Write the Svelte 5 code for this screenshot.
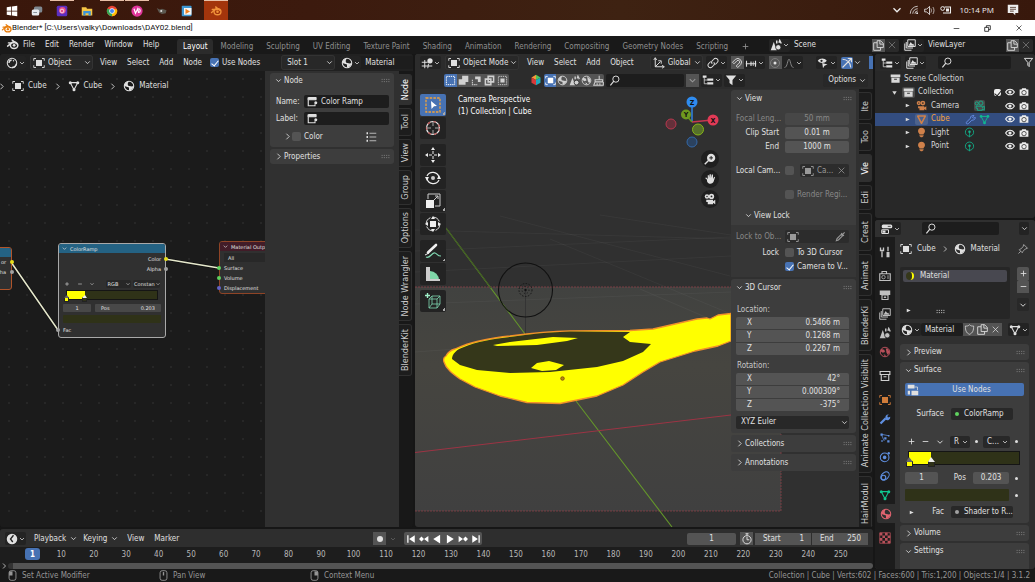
<script>
  const icons = {
    chev: '<path d="M4 6l4 4 4-4" fill="none" stroke="currentColor" stroke-width="1.500"/>',
    right: '<path d="M6 3l5 5-5 5" fill="none" stroke="currentColor" stroke-width="1.500"/>',
    tri: '<path d="M4 4l9 4-9 4z" fill="currentColor"/>',
    tridown: '<path d="M3 5h10l-5 8z" fill="currentColor"/>',
    grip: '<path d="M1 6h2M5 6h2M9 6h2M13 6h2M1 10h2M5 10h2M9 10h2M13 10h2" stroke="currentColor" stroke-width="1.400"/>',
    blender: '<path d="M2 10L9 4.500M3 6h7M7.500 2.500L13 7" fill="none" stroke="currentColor" stroke-width="1.800" stroke-linecap="round"/><ellipse cx="10" cy="9" rx="4.600" ry="4" fill="none" stroke="currentColor" stroke-width="1.800"/><circle cx="10" cy="9" r="1.700" fill="currentColor"/>',
    object: '<path d="M1 5V2h3M12 2h3v3M15 11v3h-3M4 14H1v-3" fill="none" stroke="currentColor" stroke-width="1.200"/><rect x="4" y="4" width="8" height="8" fill="currentColor"/>',
    sphere: '<circle cx="8" cy="8" r="6.300" fill="none" stroke="currentColor" stroke-width="1.400"/><path d="M1.700 8A6.300 6.300 0 0 1 8 1.700c-2 2-2 4-1 6l5 1 2-1a6.300 6.300 0 0 1-2 4.500L8 14.300V10z" fill="currentColor"/>',
    shader: '<circle cx="8" cy="8" r="6.300" fill="none" stroke="currentColor" stroke-width="1.400"/><path d="M7.500 4A4 4 0 0 0 4 8M8 14c3 0 5-2 6-5" fill="none" stroke="currentColor" stroke-width="1.800"/><circle cx="10" cy="5" r="1" fill="currentColor"/>',
    mesh: '<path d="M3 3.500h10L8 13z" fill="none" stroke="currentColor" stroke-width="1.400"/><circle cx="3" cy="3.500" r="2" fill="currentColor"/><circle cx="13" cy="3.500" r="2" fill="currentColor"/><circle cx="8" cy="13" r="2" fill="currentColor"/>',
    view3d: '<path d="M5 4v11M1 7h8M1 12h14M10 9l-1 6" stroke="currentColor" stroke-width="1.300"/><circle cx="12" cy="5" r="3.500" fill="currentColor"/>',
    node: '<path d="M3 2h10v3H3v8h9v-2" fill="none" stroke="currentColor" stroke-width="1.500"/><path d="M2 2h12v3H2z" fill="currentColor"/><circle cx="13" cy="9" r="2" fill="currentColor"/>',
    list: '<path d="M2 3h2M2 8h2M2 13h2" stroke="currentColor" stroke-width="2.500"/><path d="M6 3h9M6 8h9M6 13h9" stroke="currentColor"/>',
    axes: '<path d="M3 1v12h12M3 13l7-7" fill="none" stroke="currentColor" stroke-width="1.300"/><path d="M1 4l2-3 2 3M12 11l3 2-3 2M7 5h4v4" fill="none" stroke="currentColor" stroke-width="1.200"/>',
    link: '<path d="M7 9a3 3 0 0 1 0-4l2-2a3 3 0 0 1 5 4l-3 3M9 7a3 3 0 0 1 0 4l-2 2a3 3 0 0 1-5-4l3-3" fill="none" stroke="currentColor" stroke-width="1.400"/>',
    magnet: '<path d="M2 7l4-4a5 5 0 0 1 7 7l-4 4-2-2 4-4a2 2 0 0 0-3-3L4 9z" fill="none" stroke="currentColor" stroke-width="1.200"/>',
    snap: '<path d="M1 9h14M2 5v8M8 6v6M14 5v8" stroke="currentColor" stroke-width="1.500"/><path d="M11 6v6" stroke="currentColor"/>',
    prop: '<circle cx="8" cy="8" r="6" fill="none" stroke="#888"/><circle cx="8" cy="8" r="2" fill="currentColor"/>',
    curve: '<path d="M2 14C6 14 6 3 8 3s2 11 6 11" fill="none" stroke="#888" stroke-width="1.300"/>',
    eyeobj: '<path d="M1 5c3-4 9-4 12 0-3 4-9 4-12 0z" fill="currentColor"/><circle cx="6" cy="5" r="1.500" fill="#222"/><path d="M7 8l7 2-4 1.500L8 15z" fill="currentColor"/>',
    gizmo: '<path d="M2 14L14 2M9 2h5v5M2 3c6 0 11 5 11 11" fill="none" stroke="currentColor" stroke-width="1.500"/>',
    scene: '<path d="M1 15l4-11 4 11z" fill="currentColor"/><circle cx="11" cy="11" r="3.500" fill="currentColor" stroke="#222"/><path d="M12 5l1-3 2 4M9 2v4" stroke="currentColor" stroke-width="2"/>',
    layers: '<path d="M5 1h10v9H5zM3 4v8h9M1 6v9h9" fill="none" stroke="currentColor" stroke-width="1.300"/><path d="M6 9l3-5 2 3 1-1 2 3z" fill="currentColor"/>',
    copy: '<path d="M6 1h5l4 4v6H6zM10 1v5h5M6 4H1v11h10v-4" fill="none" stroke="currentColor" stroke-width="1.300"/>',
    x: '<path d="M3 3l10 10M13 3L3 13" stroke="currentColor" stroke-width="1.300"/>',
    plus: '<path d="M8 3v10M3 8h10" stroke="currentColor" stroke-width="1.500"/>',
    minus: '<path d="M3 8h10" stroke="currentColor" stroke-width="1.500"/>',
    search: '<circle cx="10" cy="6" r="4.500" fill="none" stroke="currentColor" stroke-width="1.400"/><path d="M7 9l-5 6" stroke="currentColor" stroke-width="1.700"/>',
    tree: '<path d="M1 2h5v3H1zM7 6h8v3H7zM7 11h8v3H7z" fill="currentColor"/><path d="M3 4v9h4M3 8h4" fill="none" stroke="currentColor"/>',
    filter: '<path d="M1 2h14l-5 6v7l-4-3V8z" fill="currentColor"/>',
    filterline: '<path d="M2 2h12L9 8v6l-2-2V8z" fill="none" stroke="currentColor" stroke-width="1.400"/>',
    box: '<path d="M1 2h14v4H1zM2 7h12v7H2z" fill="currentColor"/><path d="M6 9h4" stroke="#333" stroke-width="1.500"/>',
    boxline: '<path d="M1.500 2h13v4h-13zM3 6h10v8H3zM6 9h4" fill="none" stroke="currentColor" stroke-width="1.500"/>',
    eye: '<path d="M1 8c3-6 11-6 14 0-3 6-11 6-14 0z" fill="none" stroke="currentColor" stroke-width="1.700"/><circle cx="8" cy="8" r="2.600" fill="currentColor"/>',
    camera: '<path d="M1 4h3l1-2h6l1 2h3v10H1z" fill="currentColor"/><circle cx="8" cy="9" r="3.500" fill="none" stroke="#333" stroke-width="1.300"/>',
    movie: '<circle cx="4" cy="4.500" r="3" fill="currentColor"/><circle cx="10" cy="4.500" r="3.500" fill="currentColor"/><circle cx="4" cy="4.500" r="1" fill="#222"/><circle cx="10" cy="4.500" r="1.200" fill="#222"/><path d="M3 9h9v2l3-2v6l-3-2v2H5v-3H3z" fill="currentColor"/>',
    movieline: '<circle cx="4" cy="5" r="2.300" fill="none" stroke="currentColor" stroke-width="1.200"/><circle cx="10" cy="4.500" r="3" fill="none" stroke="currentColor" stroke-width="1.200"/><path d="M3 9h9v2l3-2v6l-3-2v2H5v-3H3z" fill="none" stroke="currentColor" stroke-width="1.200"/>',
    bulb: '<path d="M5 10a5 5 0 1 1 6 0v1H5zM5 12h6v1l-2 2H7l-2-2z" fill="currentColor"/>',
    lamp: '<circle cx="8" cy="7.500" r="6" fill="none" stroke="currentColor" stroke-width="1.200"/><circle cx="8" cy="7" r="1.800" fill="currentColor"/><path d="M8 8v7" stroke="currentColor"/>',
    triobj: '<path d="M2.500 3h11L8 13.500z" fill="none" stroke="currentColor" stroke-width="2.200" stroke-linejoin="round"/>',
    wrench: '<path d="M2 14L9 7" stroke="currentColor" stroke-width="3"/><path d="M9 8a4 4 0 0 1 4-6l-2 2 1 2 3-1a4 4 0 0 1-6 4z" fill="currentColor"/>',
    wrenchline: '<path d="M2 12l6-6c0-3 2-4 5-4l-2 3 1 1 3-1c0 3-2 4-5 4l-5 5c-2 1-4 0-3-2z" fill="none" stroke="currentColor" stroke-width="1.300"/>',
    props: '<rect x="1" y="2" width="14" height="5" rx="2" fill="currentColor"/><path d="M9 4.500h4" stroke="#222"/><rect x="1" y="9" width="9" height="5" rx="1" fill="none" stroke="currentColor" stroke-width="1.400"/><path d="M2 10h4v3H2z" fill="currentColor"/>',
    tools: '<path d="M4 7v8M12 1v6" stroke="currentColor" stroke-width="1.800"/><path d="M2 2v4h4V2" fill="none" stroke="currentColor" stroke-width="1.800"/><path d="M10 8h4v7h-4z" fill="currentColor"/>',
    render: '<path d="M1 5h14v9H1zM4 5V2h6v3" fill="none" stroke="currentColor" stroke-width="1.500"/><circle cx="6" cy="9.500" r="2.300" fill="none" stroke="currentColor"/><path d="M12 7v5" stroke="currentColor"/>',
    output: '<path d="M1 2h14v6H1z" fill="currentColor"/><path d="M4 8h8v6H4z" fill="none" stroke="currentColor" stroke-width="1.500"/><path d="M6 12l2-3 2 3z" fill="currentColor"/>',
    world: '<circle cx="8" cy="8" r="6.300" fill="none" stroke="currentColor" stroke-width="1.300"/><path d="M3 4l4 1 1 3-3 1-3-2zM9 3l3 1 2 4-2 4-2-3zM6 11l3 1-1 2z" fill="currentColor"/>',
    particles: '<path d="M3 3l10 2M3 3l4 9" stroke="currentColor"/><path d="M2 2h3v3H2zM12 4h2v2h-2zM7 7h3v3H7zM11 11h3v3h-3zM3 11h2v2H3z" fill="currentColor"/>',
    physics: '<circle cx="7.500" cy="8.500" r="5.800" fill="none" stroke="currentColor" stroke-width="1.400"/><circle cx="7.500" cy="8.500" r="2.400" fill="currentColor"/><circle cx="13" cy="3" r="1.600" fill="currentColor"/>',
    constraint: '<ellipse cx="8" cy="8" rx="6.500" ry="4.500" transform="rotate(-45 8 8)" fill="none" stroke="currentColor" stroke-width="1.400"/><circle cx="6" cy="10" r="3" fill="none" stroke="currentColor" stroke-width="1.500"/>',
    texture: '<path d="M1 1h14v14H1z" fill="none" stroke="currentColor"/><path d="M1 1h3.500v3.500H1zM8 1h3.500v3.500H8zM4.500 4.500H8V8H4.500zM11.500 4.500H15V8h-3.500zM1 8h3.500v3.500H1zM8 8h3.500v3.500H8zM4.500 11.500H8V15H4.500zM11.500 11.500H15V15h-3.500z" fill="currentColor"/>',
    pin: '<path d="M9 2l5 5-3 1-3 3-1 2-4-4 2-1 3-3zM5 11l-3 3" fill="none" stroke="currentColor" stroke-width="1.200"/>',
    shield: '<path d="M2 3c3 0 4 0 6-2 2 2 3 2 6 2 0 6-1 10-6 12C3 13 2 9 2 3z" fill="none" stroke="currentColor" stroke-width="1.100"/>',
    usenodes: '<path d="M1 1h9v5H1zM6 9h9v6H6zM1 9h3v5H1z" fill="currentColor"/><path d="M10 4h4v4" fill="none" stroke="currentColor"/>',
    dropper: '<path d="M2 14l1-3 6-6 2 2-6 6zM9 3l4 4M11 5l3-3" fill="none" stroke="currentColor" stroke-width="1.600"/>',
    clock: '<circle cx="8" cy="8" r="7" fill="currentColor"/><path d="M10 3L6 8l3 4" stroke="#222" fill="none" stroke-width="1.800"/>',
    watch: '<circle cx="8" cy="9" r="5.500" fill="none" stroke="currentColor" stroke-width="1.300"/><path d="M8 9V5M6 1h4M8 1v2M8 9h3" stroke="currentColor" stroke-width="1.300"/>',
    rec: '<circle cx="8" cy="8" r="4" fill="currentColor"/>',
    first: '<path d="M2 2h2v12H2zM14 2v12L5 8z" fill="currentColor"/>',
    prevkey: '<path d="M0 8l4-4 4 4-4 4zM15 3v10L8 8z" fill="currentColor"/>',
    play: '<path d="M3 1l11 7-11 7z" fill="currentColor"/>',
    back: '<path d="M13 1L2 8l11 7z" fill="currentColor"/>',
    nextkey: '<path d="M16 8l-4-4-4 4 4 4zM1 3v10l7-5z" fill="currentColor"/>',
    last: '<path d="M14 2h-2v12h2zM2 2v12l9-6z" fill="currentColor"/>',
    mouseL: '<rect x="3" y="1" width="10" height="14" rx="3" fill="none" stroke="currentColor" stroke-width="1.300"/><path d="M3 2h5v6H3z" fill="currentColor"/>',
    mouseM: '<rect x="3" y="1" width="10" height="14" rx="3" fill="none" stroke="currentColor" stroke-width="1.300"/><path d="M7 3h2v5H7z" fill="currentColor"/>',
    mouseR: '<rect x="3" y="1" width="10" height="14" rx="3" fill="none" stroke="currentColor" stroke-width="1.300"/><path d="M8 2h5v6H8z" fill="currentColor"/>',
    sel: '<rect x="2" y="2" width="12" height="12" fill="none" stroke="currentColor" stroke-width="1.400" stroke-dasharray="2 1.200"/>',
    sel2: '<path d="M6 1h9v9h-4v4H1V6h5z" fill="currentColor"/>',
    sel3: '<path d="M6 2h8v8h-4V6H6z" fill="currentColor"/><path d="M2 7v7h7" fill="none" stroke="currentColor" stroke-width="1.500" stroke-dasharray="2 1.200"/>',
    sel4: '<path d="M6 2h8v8H6zM2 6h8v8H2z" fill="none" stroke="currentColor" stroke-width="2.200"/>',
    sel5: '<rect x="2" y="2" width="12" height="12" fill="none" stroke="currentColor" stroke-width="1.300" stroke-dasharray="2 1.200"/><path d="M5 5h6v6H5z" fill="currentColor"/>',
    hex: '<path d="M8 1v7L2 4.500z" fill="#f39a3b"/><path d="M2 4.500L8 8v7l-6-3.500z" fill="#d83a3a"/><path d="M8 1l6 3.500L8 8z" fill="#52c55a"/><path d="M14 4.500v7L8 15V8z" fill="#20a9bd"/>',
    brush: '<path d="M9 1v6M3 7h11v3H3zM3 10l-2 5h14v-5M6 12v3M10 12v3" fill="none" stroke="currentColor" stroke-width="1.500"/>',
    tselect: '<rect x="1" y="1" width="14" height="14" fill="none" stroke="#f2a33a" stroke-width="1.300" stroke-dasharray="2.500 1.200"/><path d="M6 4l6 5-3 .3L6.500 12z" fill="#fff"/>',
    tcursor: '<circle cx="8" cy="8" r="6.500" fill="none" stroke="#eee" stroke-width="1.200"/><circle cx="8" cy="8" r="6.500" fill="none" stroke="#c05555" stroke-width="1.200" stroke-dasharray="3 3"/><path d="M8 1v5M8 10v5M1 8h5M10 8h5" stroke="#ccc" stroke-width=".8"/>',
    tmove: '<path d="M8 0l2 3H6zM8 16l2-3H6zM0 8l3 2V6zM16 8l-3 2V6z" fill="#eee"/><path d="M8 4v3M8 9v3M4 8h3M9 8h3" stroke="#eee"/>',
    trotate: '<path d="M2 6a6.500 6.500 0 0 1 12 1M14 10a6.500 6.500 0 0 1-12-1" fill="none" stroke="#eee" stroke-width="1.200"/><circle cx="8" cy="8" r="2" fill="#ccc"/><path d="M0 7h4l-2 4zM12 9h4l-2-4z" fill="#eee"/>',
    tscale: '<path d="M3 6V1h12v12h-5M9 7l4-4M10 3h3v3" fill="none" stroke="#ccc" stroke-width="1"/><path d="M1 7h8v8H1z" fill="#eee"/>',
    ttrans: '<circle cx="8" cy="8" r="6.800" fill="none" stroke="#ddd" stroke-dasharray="8 2.600"/><path d="M5 5h6v6H5zM8 0l2 3H6zM8 16l2-3H6zM0 8l3 2V6zM16 8l-3 2V6z" fill="#eee"/>',
    tannot: '<path d="M3 9.500L11 2" stroke="#eee" stroke-width="2.600" stroke-linecap="round"/><path d="M0 12l4-2" stroke="#eee"/><path d="M1 14c4 2 6-5 9-4s2 3 6 3" fill="none" stroke="#7fd6b0" stroke-width="1.200"/>',
    tmeasure: '<path d="M5 5a9 9 0 0 1 9 9H5z" fill="#7fd6a8"/><path d="M1 1h4v14H1z" fill="#ccc"/><path d="M1 13h14v2H1z" fill="#ccc"/>',
    tcube: '<path d="M4 6h8v9H4zM4 6l3-3h8v8l-3 4M12 6l3-3M7 3v8l-3 4M7 11h8" fill="none" stroke="#7fd6b0" stroke-width=".8"/><path d="M2.500 0v5M0 2.500h5" stroke="#9ff0c8" stroke-width="1.400"/>',
    hand: '<path d="M4 9L1.500 6.500 3 6l2 2V3h1.600v4L7.500 1.500h1.700V7l1.200-5H12v6l1.500-3 1.200.5L13 11c-1 4-7 5-9 0z" fill="currentColor"/>',
    zoom: '<circle cx="9.500" cy="6.500" r="5.500" fill="currentColor"/><path d="M6 10l-5 5" stroke="currentColor" stroke-width="2"/><path d="M9.500 4v5M7 6.500h5" stroke="#222" stroke-width="1.300"/>',
    wifi: '<path d="M2 14A12 12 0 0 1 14 2M6 14a8 8 0 0 1 8-8M9.500 14a4.500 4.500 0 0 1 4.500-4.500" fill="none" stroke="currentColor" stroke-width="1.200"/><circle cx="13" cy="13" r="1.500" fill="currentColor"/>',
    sound: '<path d="M1 6h3l4-4v12l-4-4H1z" fill="none" stroke="currentColor" stroke-width="1.200"/><path d="M10 5c1 2 1 4 0 6M13 3c2 3 2 7 0 10" stroke="currentColor" fill="none"/>',
    battery: '<path d="M6 4h8v8H4" fill="none" stroke="currentColor" stroke-width="1.400"/><path d="M8 6h4v4H8z" fill="currentColor"/><circle cx="3.500" cy="6" r="2.500" fill="none" stroke="currentColor" stroke-width="1.300"/>',
    note: '<path d="M1 1h14v11h-4v3l-3-3H1z" fill="currentColor"/><path d="M4 4.500h8M4 7h8M4 9.500h5" stroke="#3b1d10"/>',
    windows: '<path d="M1 3l6-1v5.500H1zM8 2l7-1v6.500H8zM1 8.500h6V14l-6-1zM8 8.500h7V15l-7-1z" fill="#fff"/>',
    chat: '<rect x="4" y="2" width="11" height="8" rx="2" fill="#7f8890"/><rect x="1" y="6" width="10" height="8" rx="2" fill="#e8edf0"/><path d="M3 10h5" stroke="#6a7480"/>',
    purple: '<rect x="1" y="1" width="14" height="14" rx="2" fill="#5b2fc0"/><circle cx="8.500" cy="7" r="4.500" fill="#e74d8b"/><circle cx="8" cy="8" r="2.500" fill="none" stroke="#fff"/>',
    folder: '<path d="M1 3h6l1 2h7v9H1z" fill="#f5c546"/><path d="M3 8h10v6h-3v-3H6v3H3z" fill="#3b93d8"/>',
    chrome: '<circle cx="8" cy="8" r="7" fill="#e94335"/><path d="M2 4.500A7 7 0 0 0 8 15l3.500-6z" fill="#35a853"/><path d="M8 15A7 7 0 0 0 14.500 5.500H8z" fill="#fbbc05"/><circle cx="8" cy="8" r="3.300" fill="#4285f4" stroke="#fff" stroke-width="1"/>',
    pink: '<circle cx="8" cy="8" r="7.500" fill="#e0359a"/><path d="M4 5l2 6 3-6 1 5c3 0 3-5 0-5" fill="none" stroke="#fff" stroke-width="1.600"/>',
    gimp: '<path d="M1 4l4 2 3-1 6 2-1 4-5 1-4-2z" fill="#5c5850"/><circle cx="7" cy="8" r="1.400" fill="#ddd"/>',
    media: '<rect x="1" y="1" width="13" height="14" rx="1" fill="#3d97d3"/><path d="M4 4h10v9H4z" fill="#f5f5f5"/><path d="M6 5l6 3.500L6 12z" fill="#f08020"/>',
    min: '<path d="M3 8h10" stroke="currentColor" stroke-width="1.200"/>',
    restore: '<path d="M3 6h7v7H3zM6 6V3h7v7h-3" fill="none" stroke="currentColor" stroke-width="1.400"/>'
  };

  const apps = [
    ['windows', 'Start'], ['chat', 'Chat'], ['purple', 'Capture', 1], ['folder', 'Files'],
    ['chrome', 'Chrome', 1], ['pink', 'Studio', 1], ['gimp', 'GIMP'], ['media', 'Player']
  ];
  const workspaces = ['Layout', 'Modeling', 'Sculpting', 'UV Editing', 'Texture Paint', 'Shading', 'Animation', 'Rendering', 'Compositing', 'Geometry Nodes', 'Scripting'];
  const nodeTabs = [['Node', 31], ['Tool', 28], ['View', 28], ['Group', 35], ['Options', 40], ['Node Wrangler', 70], ['BlenderKit', 52]];
  const viewTabs = [['Ite', 28], ['Too', 28], ['Vie', 28], ['Edi', 25], ['Creat', 38], ['Animat', 42], ['BlenderKi', 52], ['Animate Collection Visibilit', 119], ['HairModul', 55]];
  const tools = [
    [['tselect', 'Select box', 1], ['tcursor', 'Cursor']],
    [['tmove', 'Move'], ['trotate', 'Rotate'], ['tscale', 'Scale', 1], ['ttrans', 'Transform']],
    [['tannot', 'Annotate', 1], ['tmeasure', 'Measure']],
    [['tcube', 'Add cube', 1]]
  ];
  const frames = Array.from({ length: 25 }, (_, i) => (i + 1) * 10);
  const navTabs = [
    ['tools', '#c8c8c8', 'Tool', 1], ['render', '#c0c0c0', 'Render'], ['output', '#c0c0c0', 'Output'], ['layers', '#c0c0c0', 'View layer'],
    ['scene', '#c0c0c0', 'Scene'], ['world', '#b8505a', 'World', 1], ['boxline', '#d0d0d0', 'Collection', 1], ['object', '#d07c3a', 'Object'],
    ['wrench', '#5f8fe0', 'Modifiers'], ['particles', '#5f8fe0', 'Particles'], ['physics', '#5f8fe0', 'Physics'], ['constraint', '#5f8fe0', 'Constraints'],
    ['mesh', '#10c890', 'Data'], ['sphere', '#e06470', 'Material', 1], ['texture', '#b8505a', 'Texture']
  ];
  const location = [['X', '0.5466 m'], ['Y', '0.1268 m'], ['Z', '0.2267 m']];
  const rotation = [['X', '42°'], ['Y', '0.000309°'], ['Z', '-375°']];
  const objects = [['Camera', 'movie'], ['Cube', 'triobj'], ['Light', 'bulb'], ['Point', 'bulb']];
</script>

{#snippet ic(n, s = 12)}
  <svg class="ic" width={s} height={s} viewBox="0 0 16 16" aria-hidden="true">{@html icons[n]}</svg>
{/snippet}
{#snippet drop(n, label)}
  <button class="drop" aria-label={label}>{@render ic(n)}{@render ic('chev', 8)}</button>
{/snippet}
{#snippet combo(value, label)}
  <span class="combo"><select aria-label={label}><option>{value}</option></select>{@render ic('chev', 9)}</span>
{/snippet}
{#snippet head(text, open, grip = true)}
  <button class="head">{@render ic(open ? 'chev' : 'right', 9)}<span>{text}</span>{#if grip}<i>{@render ic('grip', 9)}</i>{/if}</button>
{/snippet}
{#snippet vtabs(list, active)}
  <div class="vtabs">
    {#each list as [t, h]}<button class:on={t === active} style:height="{h}px"><span>{t}</span></button>{/each}
  </div>
{/snippet}
{#snippet xyz(rows, group)}
  <div class="stack">
    {#each rows as [k, v]}<label><span>{k}</span><input value={v} aria-label="{group} {k}" /></label>{/each}
  </div>
{/snippet}

<div class="page">
  <div class="taskbar">
    {#each apps as [n, l, run]}<button class:run aria-label={l}>{@render ic(n)}</button>{/each}
    <button class="run cur" aria-label="Blender">{@render ic('blender')}</button>
    <div class="tray">
      {@render ic('chev', 14)}{@render ic('wifi', 10)}{@render ic('sound', 11)}{@render ic('battery', 12)}
      <span>10:14 PM</span>{@render ic('note', 12)}
    </div>
  </div>
  <div class="title">
    <span class="logo">{@render ic('blender', 11)}</span><span>Blender* [C:\Users\valky\Downloads\DAY02.blend]</span>
    <div class="wins"><button aria-label="Minimize">{@render ic('min', 9)}</button><button aria-label="Restore">{@render ic('restore', 9)}</button><button aria-label="Close">{@render ic('x', 8)}</button></div>
  </div>
  <header class="top">
    <div class="menus"><button aria-label="Blender menu">{@render ic('blender', 13)}</button>{#each ['File', 'Edit', 'Render', 'Window', 'Help'] as m}<button>{m}</button>{/each}</div>
    <nav>{#each workspaces as w, i}<button class:on={i === 0}>{w}</button>{/each}<button aria-label="Add workspace">{@render ic('plus', 9)}</button></nav>
    <div class="ids">
      <div class="id">{@render drop('scene', 'Browse scene')}<input value="Scene" aria-label="Scene name" /><button class="lit" aria-label="New scene">{@render ic('copy', 11)}</button><button class="dim" aria-label="Remove scene">{@render ic('x', 10)}</button></div>
      <div class="id">{@render drop('layers', 'Browse view layer')}<input value="ViewLayer" aria-label="View layer name" /><button class="lit" aria-label="New layer">{@render ic('copy', 11)}</button><button class="dim" aria-label="Remove layer">{@render ic('x', 10)}</button></div>
    </div>
  </header>

  <main>
    <div class="left">
      <div class="editors">
        <section class="nodeed">
          <div class="bar">
            {@render drop('shader', 'Editor type')}
            <span class="pick w62">{@render ic('object')}{@render combo('Object', 'Shader type')}</span>
            <div class="menus">{#each ['View', 'Select', 'Add', 'Node'] as m}<button>{m}</button>{/each}</div>
            <label class="chk"><input type="checkbox" checked />Use Nodes</label>
            <span class="pick slot">{@render combo('Slot 1', 'Slot')}</span>
            <div class="id matid">{@render drop('sphere', 'Browse material')}<input value="Material" aria-label="Material name" /></div>
          </div>
          <div class="nodebody">
            <div class="canvas">
              <div class="crumbs">{@render ic('right', 9)}<span>{@render ic('object')}Cube</span>{@render ic('right', 9)}<span>{@render ic('mesh')}Cube</span>{@render ic('right', 9)}<span>{@render ic('sphere')}Material</span></div>
              <svg class="cables" width="265" height="458" aria-hidden="true">
                <g fill="none"><path d="M11 191L58 259M165 188L219 197" stroke="#111" stroke-width="3" /><path d="M11 191L58 259M165 188L219 197" stroke="#e6e8cc" stroke-width="1.500" /></g>
              </svg>
              <div class="node prev"><div class="nh"></div><p>or<b class="y"></b></p><p>ha<b></b></p></div>
              <div class="node ramp">
                <div class="nh">{@render ic('chev', 7)}ColorRamp</div>
                <p class="r">Color<b class="y"></b></p>
                <p class="r">Alpha<b></b></p>
                <div class="nrow"><button aria-label="Add stop">{@render ic('plus', 6)}</button><button aria-label="Delete stop">{@render ic('minus', 6)}</button><button aria-label="Tools">{@render ic('chev', 6)}</button><button class="nsel m">RGB{@render ic('chev', 6)}</button><button class="nsel">Constan{@render ic('chev', 6)}</button></div>
                <div class="grad"><i></i><i class="second"></i></div>
                <div class="nnum"><input value="1" aria-label="Stop index" /><label>Pos<input value="0.203" /></label></div>
                <div class="swatch"></div>
                <p class="l">Fac<b></b></p>
              </div>
              <div class="node out">
                <div class="nh">{@render ic('chev', 7)}Material Output</div>
                <div class="all">All</div>
                <p class="l">Surface<b class="g"></b></p><p class="l">Volume<b class="g"></b></p><p class="l">Displacement<b class="v"></b></p>
              </div>
            </div>
            <aside class="nside">
              <div class="panel">
                {@render head('Node', true)}
                <div class="nfs">
                  <label class="nf"><span>Name:</span><span class="tf">{@render ic('node')}<input value="Color Ramp" /></span></label>
                  <label class="nf"><span>Label:</span><span class="tf">{@render ic('node')}<input value="" /></span></label>
                </div>
                <div class="colrow">{@render ic('right', 9)}<label class="chk"><input type="checkbox" />Color</label><i>{@render ic('list')}</i></div>
              </div>
              <div class="panel">{@render head('Properties', false)}</div>
            </aside>
            {@render vtabs(nodeTabs, 'Node')}
          </div>
        </section>

        <section class="view">
          <svg class="scene" viewBox="415 54 458 474" preserveAspectRatio="xMinYMax slice" aria-hidden="true">
            <defs><linearGradient id="ground" x1="0" y1="0" x2="0" y2="1"><stop offset="0" stop-color="#414240" /><stop offset=".35" stop-color="#464540" /><stop offset="1" stop-color="#404040" /></linearGradient></defs>
            <path d="M415 54h458v474H415z" fill="#303030" />
            <path d="M415 288h366v224H415z" fill="url(#ground)" />
            <g fill="none" stroke="#fff" stroke-opacity=".05" stroke-width=".8"><path d="M415 231l316 9M415 252l316-14M415 273l316-16M415 305l316-12M415 353l110-8M500 217l230 60M550 240l181 75M640 290l70 30M600 216l131 20" /></g>
            <path d="M415 288h366v224H415" fill="none" stroke="#8a4048" stroke-width=".8" stroke-dasharray="2 1" />
            <path d="M446 229L525 335M576 402L672 528" stroke="#64962a" stroke-width="1.100" />
            <path d="M446 229l45 60" stroke="#405c24" stroke-width="1.200" />
            <path d="M415 453.500L731 416" stroke="#9c3444" stroke-width="1" />
            <path d="M525.500 292v43" stroke="#343434" />
            <path d="M444 363C443 360 444 358 446 357 448 353 451 351 455 350 462 347 470 344 477 342.500 488 340 498 338 510 337 530 334.500 550 332.500 570 332L630 331.500 653 330 697 320 707 319 710 320 718 316 731 314.500V342L718 347 695 352 660 363 643 373 623 386 597 397 560 404.500 527 403.500 500 397 475 388 460 380C453 375 446 370 444 363z" fill="#ff0" stroke="#f2902a" stroke-width="1.300" stroke-linejoin="round" />
            <path d="M452 360C452 355 457 350 464 348 475 343 495 339.500 510 338 530 335 550 333 570 332.500L630 333 623 338 630 343 651 345 643 353 623 362 597 368 550 373 510 374 477 371 460 366z" fill="#35371a" />
            <path d="M493 346L510 343 527 341 553 338 578 339 567 342 537 346 497 347zM531 369l6-5 12-2 15 4-8 5-14 1z" fill="#ff0" />
            <circle cx="562.500" cy="379.500" r="1.800" fill="#b88914" stroke="#713c0c" stroke-width=".7" />
            <circle cx="525.500" cy="291" r="27" fill="none" stroke="#111" stroke-width="1.100" />
            <g fill="none" stroke="#151515"><circle cx="525.500" cy="291" r="6.500" stroke-dasharray="1.500 1.500" /><circle cx="525.500" cy="291" r="3.500" stroke-dasharray="1 2" /></g><circle cx="525.500" cy="291" r="1.200" fill="#111" />
          </svg>
          <div class="bar vbar">
            {@render drop('view3d', 'Editor type')}
            <span class="pick w72">{@render ic('object')}{@render combo('Object Mode', 'Mode')}</span>
            <div class="menus">{#each ['View', 'Select', 'Add', 'Object'] as m}<button>{m}</button>{/each}</div>
            <span class="pick w52">{@render ic('axes')}{@render combo('Global', 'Orientation')}</span>
            <span class="pair">{@render drop('link', 'Pivot')}</span>
            <span class="pair"><button class="lit" aria-label="Snap">{@render ic('magnet')}</button>{@render drop('snap', 'Snap to')}</span>
            <span class="pair"><button class="lit" aria-label="Proportional">{@render ic('prop')}</button>{@render drop('curve', 'Falloff')}</span>
            <span class="pair vis">{@render drop('eyeobj', 'Visibility')}</span>
            <span class="pair"><button class="blue" aria-label="Gizmos">{@render ic('gizmo')}</button>{@render ic('chev', 9)}</span>
            <span class="edge"></span>
          </div>
          <div class="tbar">
            <div class="seg">{#each ['sel', 'sel2', 'sel3', 'sel4', 'sel5'] as n, i}<button class:blue={i === 0} aria-label="Select mode {i + 1}">{@render ic(n, 11)}</button>{/each}</div>
            <div class="asset">{@render ic('hex')}
              <div class="seg">{#each ['object', 'sphere', 'scene', 'world', 'brush'] as n, i}<button class:blue={i === 0} aria-label="Asset type {i + 1}">{@render ic(n, 11)}</button>{/each}</div>
              <span class="find">{@render ic('search', 11)}<input aria-label="Search assets" /></span><button class="lit more" aria-label="More">{@render ic('chev', 11)}</button>
              {@render drop('tree', 'Categories')}{@render drop('filter', 'Filter')}
            </div>
            <button class="opt">Options{@render ic('chev', 9)}</button>
          </div>
          <div class="vbody">
            <div class="toolbar">
              {#each tools as g, gi}<div>{#each g as [n, l, corner], i}<button class:blue={gi === 0 && i === 0} class:corner aria-label={l}>{@render ic(n, 16)}</button>{/each}</div>{/each}
            </div>
            <div class="info"><p>Camera Perspective</p><p>(1) Collection | Cube</p></div>
            <div class="nav">
              <svg width="56" height="52" viewBox="0 0 56 52" aria-label="Axis gizmo">
                <path d="M29 26V8" stroke="#2f83e3" stroke-width="1.500" /><path d="M29 26l20-2" stroke="#c63650" stroke-width="1.500" /><path d="M29 26l-6-7" stroke="#6a961c" stroke-width="1.500" />
                <circle cx="8" cy="28" r="5" fill="#65303a" stroke="#b8384e" /><circle cx="29" cy="46" r="5" fill="#2b425f" stroke="#3468a8" /><circle cx="35" cy="33.500" r="5.500" fill="#56702a" stroke="#86b418" />
                <circle cx="23" cy="18.500" r="5" fill="#6e981f" /><circle cx="29" cy="6" r="5.500" fill="#2f8cf0" /><circle cx="50" cy="24" r="5.500" fill="#e23a56" />
                <g font-size="7" font-weight="700" text-anchor="middle" fill="#111"><text x="29" y="9">Z</text><text x="23" y="21">Y</text><text x="50" y="27">X</text></g>
              </svg>
              {#each [['zoom', 'Zoom'], ['hand', 'Pan'], ['movie', 'Camera view']] as [n, l]}<button aria-label={l}>{@render ic(n)}</button>{/each}
            </div>
            <aside class="vside">
              <div class="panel">
                {@render head('View', true)}
                <div class="form">
                  <label class="off"><span>Focal Leng...</span><input class="num" value="50 mm" disabled /></label>
                  <label><span>Clip Start</span><input class="num" value="0.01 m" /></label>
                  <label><span>End</span><input class="num" value="1000 m" /></label>
                  <div class="f gap"><span>Local Cam...</span><input type="checkbox" aria-label="Local camera" /><span class="obj">{@render ic('object')}<em>Ca...</em>{@render ic('x', 9)}</span></div>
                  <div class="f gap off"><span></span><label class="chk"><input type="checkbox" disabled />Render Regi...</label></div>
                </div>
                <div class="sub">{@render head('View Lock', true, false)}</div>
                <div class="form lock">
                  <div class="f off"><span>Lock to Ob...</span><span class="obj">{@render ic('object')}<em></em>{@render ic('dropper', 11)}</span></div>
                  <div class="f lk"><span>Lock</span><label class="chk"><input type="checkbox" />To 3D Cursor</label></div>
                  <div class="f"><span></span><label class="chk"><input type="checkbox" checked />Camera to V...</label></div>
                </div>
              </div>
              <div class="panel cursor">
                {@render head('3D Cursor', true)}
                <h4>Location:</h4>{@render xyz(location, 'Location')}
                <h4>Rotation:</h4>{@render xyz(rotation, 'Rotation')}
                <div class="euler">{@render combo('XYZ Euler', 'Rotation mode')}</div>
              </div>
              <div class="panel">{@render head('Collections', false)}</div>
              <div class="panel">{@render head('Annotations', false)}</div>
            </aside>
            {@render vtabs(viewTabs, 'Vie')}
          </div>
        </section>
      </div>

      <section class="timeline">
        <div class="bar">
          {@render drop('clock', 'Editor type')}
          <div class="tl"><button>Playback{@render ic('chev', 9)}</button><button>Keying{@render ic('chev', 9)}</button><button>View</button><button>Marker</button></div>
          <button class="lit rec" aria-label="Auto keying">{@render ic('rec')}</button>
          <button class="keyset" aria-label="Keying options">{@render ic('chev', 8)}</button>
          <div class="seg play">{#each ['first', 'prevkey', 'back', 'play', 'nextkey', 'last'] as n}<button aria-label={n}>{@render ic(n, 10)}</button>{/each}</div>
          <input class="num frame" value="1" aria-label="Current frame" />
          <button class="lit" aria-label="Preview range">{@render ic('watch')}</button>
          <div class="range"><label>Start<input value="1" /></label><label>End<input value="250" /></label></div>
        </div>
        <div class="ruler"><span class="one"><b>1</b></span>{#each frames as f}<span>{f}</span>{/each}</div>
        <div class="scroll">{@render ic('right', 8)}<i></i></div>
      </section>
    </div>

    <div class="right">
      <section class="outliner">
        <div class="bar">{@render drop('tree', 'Editor type')}{@render drop('layers', 'Display mode')}<span class="find">{@render ic('search', 11)}<input aria-label="Search outliner" /></span><button class="plain" aria-label="Filter">{@render ic('filterline', 11)}</button></div>
        <div class="rows">
          <div class="o root">{@render ic('box', 11)}<span>Scene Collection</span></div>
          <div class="o coll">{@render ic('tridown', 7)}<b>{@render ic('box', 11)}</b><span>Collection</span><i><input type="checkbox" checked aria-label="Include collection" />{@render ic('eye', 10)}{@render ic('camera', 10)}</i></div>
          {#each objects as [name, icon]}
            <div class="o child" class:sel={name === 'Cube'}>{@render ic('tri', 7)}<b class="oi">{@render ic(icon, 11)}</b><span>{name}</span>
              {#if name === 'Camera'}<u class="cam">{@render ic('movieline', 11)}</u>{:else if name === 'Cube'}<u class="mod">{@render ic('wrenchline', 11)}</u><u>{@render ic('mesh', 11)}</u>{:else}<u class="lt">{@render ic('lamp', 11)}</u>{/if}
              <i>{@render ic('eye', 10)}{@render ic('camera', 10)}</i></div>
          {/each}
        </div>
      </section>
      <section class="propsed">
        <div class="bar">{@render drop('props', 'Editor type')}<span class="find mid">{@render ic('search', 11)}<input aria-label="Search properties" /></span><button class="drop" aria-label="Options">{@render ic('chev', 9)}</button></div>
        <div class="pbody">
          <div class="pnav">{#each navTabs as [n, c, l, gap]}<button class:gap class:on={l === 'Material'} style:color={c} aria-label={l}>{@render ic(n)}</button>{/each}</div>
          <div class="pmain">
            <div class="crumbs">{@render ic('object')}<span>Cube</span>{@render ic('right', 8)}{@render ic('sphere')}<span>Material</span><i>{@render ic('pin')}</i></div>
            <div class="slots">
              <div class="lb"><button><i class="ball"></i>Material</button><div>{@render ic('tri', 7)}{@render ic('grip', 9)}<span></span></div></div>
              <div class="lbt"><button aria-label="Add slot">{@render ic('plus', 9)}</button><button aria-label="Remove slot">{@render ic('minus', 9)}</button><button class="dk" aria-label="Slot menu">{@render ic('chev', 10)}</button></div>
            </div>
            <div class="id pid">{@render drop('sphere', 'Browse material')}<input value="Material" aria-label="Material datablock" /><button class="lit" aria-label="Fake user">{@render ic('shield', 11)}</button><button class="lit" aria-label="New material">{@render ic('copy', 11)}</button><button class="lit" aria-label="Unlink">{@render ic('x', 9)}</button><span></span>{@render drop('mesh', 'Link')}</div>
            <div class="panel">{@render head('Preview', false)}</div>
            <div class="panel surf">
              {@render head('Surface', true)}
              <button class="use">{@render ic('usenodes', 12)}<span>Use Nodes</span></button>
              <div class="sr"><span>Surface</span><button><i class="dot gr"></i>ColorRamp</button></div>
              <div class="ctl">{@render ic('plus', 9)}{@render ic('minus', 9)}{@render ic('chev', 10)}<button>R{@render ic('chev', 8)}</button><i class="dot"></i><button>C...{@render ic('chev', 8)}</button><i class="dot"></i></div>
              <div class="grad big"><i></i><i class="second"></i></div>
              <div class="pos"><input class="num" value="1" aria-label="Stop" /><label>Pos<input class="num" value="0.203" /></label><i class="dot"></i></div>
              <div class="pos"><div class="swatch"></div><i class="dot"></i></div>
              <div class="sr fac">{@render ic('tri', 7)}<span>Fac</span><button><i class="dot gy"></i>Shader to R...</button></div>
            </div>
            <div class="panel">{@render head('Volume', false)}</div>
            <div class="panel last">{@render head('Settings', true)}</div>
          </div>
        </div>
      </section>
    </div>
  </main>

  <footer>
    <span>{@render ic('mouseL', 11)}Set Active Modifier</span><span>{@render ic('mouseM', 11)}Pan View</span><span>{@render ic('mouseR', 11)}Context Menu</span>
    <p>Collection | Cube | Verts:602 | Faces:600 | Tris:1,200 | Objects:1/4 | 3.1.2</p>
  </footer>
</div>

<style>
  :global(body) { margin: 0; background: #161616; }
  .page { height: 100vh; min-height: 560px; display: flex; flex-direction: column; overflow: hidden; background: #161616; color: #e0e0e0; font: 8px/12px "DejaVu Sans Condensed", "Noto Sans", sans-serif; }
  .page :global(*) { box-sizing: border-box; }
  button, input, select { font: inherit; color: inherit; border: 0; margin: 0; padding: 0; background: none; min-width: 0; border-radius: 2px; outline: 0; }
  button { display: flex; align-items: center; justify-content: center; white-space: nowrap; }
  p, h4 { margin: 0; font-weight: 400; }
  i, em, u { font-style: normal; text-decoration: none; }
  .ic { display: block; flex: none; }
  input[type='checkbox'] { appearance: none; width: 9px; height: 9px; flex: none; background: #545454; border-radius: 2px; }
  input[type='checkbox']:checked { background: #4772b3; }
  input[type='checkbox']:checked::after { content: ''; display: block; width: 3px; height: 6px; margin: 1px 3px; border: solid #fff; border-width: 0 1px 1px 0; transform: rotate(40deg); }

  .taskbar { height: 20px; flex: none; display: flex; gap: 1px; background: linear-gradient(90deg, #3a170b, #3c1a0e 30%, #3e2212 60%, #38180c); }
  .taskbar button { width: 24px; border-top: 1px solid transparent; border-radius: 0; }
  .taskbar .run { border-color: #e8c0a8; }
  .taskbar .cur { background: #a3350c; color: #f0923a; margin-left: 4px; }
  .tray { margin-left: auto; display: flex; align-items: center; gap: 5px; padding-right: 16px; color: #eee; font-family: "Open Sans", sans-serif; }
  .tray span { margin: 0 8px 0 3px; }
  .title { height: 16px; flex: none; display: flex; align-items: center; background: #fff; color: #111; font-family: Roboto, sans-serif; padding-left: 1px; }
  .logo { color: #e87d0d; }
  .wins { margin-left: auto; display: flex; gap: 22px; padding-right: 12px; }
  .wins button { width: 9px; }

  .top { height: 18px; flex: none; display: flex; align-items: center; background: #191919; padding-left: 6px; }
  .menus { display: flex; gap: 10px; }
  .top .menus { width: 171px; gap: 10px; margin-bottom: 1px; }
  .top .menus button:nth-child(2) { margin-left: -6px; }
  nav { display: flex; align-self: flex-end; height: 15px; gap: 1px; color: #8f8f8f; }
  nav button { padding: 0 6px; }
  nav .on { background: #2b2b2b; color: #fff; border-radius: 3px 3px 0 0; }
  .ids { margin-left: auto; display: flex; gap: 4px; padding-right: 2px; }
  .id { display: flex; height: 13px; background: #1d1d1d; border-radius: 2px; }
  .ids .id { width: 130px; }
  .id input { flex: 1; width: 20px; padding: 0 4px; }
  .drop { height: 13px; padding: 0 0 0 1px; background: #232323; border-radius: 2px; flex: none; }
  .lit { height: 13px; width: 13px; background: #545454; flex: none; border-radius: 0; }
  .dim { width: 14px; color: #777; background: #2a2a2a; }
  .blue { background: #4772b3; }

  main { flex: 1; min-height: 0; display: flex; gap: 2px; }
  .left { flex: 1; min-width: 0; display: flex; flex-direction: column; gap: 2px; }
  .right { width: 160px; flex: none; display: flex; flex-direction: column; gap: 2px; }
  .editors { flex: 1; min-height: 0; display: flex; gap: 2px; }
  .nodeed { flex: 413 1 0; min-width: 0; display: flex; flex-direction: column; background: #1b1b1b; overflow: hidden; border-radius: 3px; }
  .view { flex: 458 1 0; min-width: 0; display: flex; flex-direction: column; position: relative; overflow: hidden; border-radius: 3px; }
  .bar { height: 17px; flex: none; display: flex; align-items: center; background: #212121; padding-left: 5px; }
  .pick { display: flex; align-items: center; height: 13px; background: #282828; border-radius: 2px; padding-left: 2px; gap: 2px; flex: none; box-shadow: 0 0 0 1px #333; }
  .combo { display: flex; flex: 1; align-items: center; min-width: 0; }
  .combo select { appearance: none; flex: 1; width: 10px; height: 12px; padding: 0 0 0 1px; margin-right: -9px; }
  .w62 { width: 61px; margin-left: 5px; }
  .w72 { width: 72px; margin-left: 5px; }
  .w52 { width: 51px; margin-left: 17px; }
  .nodeed .menus { margin-left: 8px; }
  .view .menus { margin-left: 9px; gap: 10px; }
  .chk { display: flex; align-items: center; gap: 3px; white-space: nowrap; }
  .nodeed .bar .chk { margin-left: 8px; }
  .slot { width: 52px; margin-left: 22px; padding-left: 4px; }
  .matid { margin-left: 6px; flex: 1; }
  .nodebody { flex: 1; min-height: 0; display: flex; }
  .canvas { flex: 1; min-width: 0; position: relative; overflow: hidden; background: radial-gradient(circle at 9px 8px, #272727 1px, transparent 1px) 0 0/18px 18px #1b1b1b; }
  .crumbs { display: flex; align-items: center; gap: 6px; padding-top: 9px; }
  .crumbs span { display: flex; align-items: center; gap: 4px; }
  .canvas .crumbs { margin-left: -3px; }
  .cables { position: absolute; left: 0; top: 0; }
  .node { position: absolute; background: #303030; border: 1px solid #a9a9a9; border-radius: 3px; font: 5px/10px "DejaVu Sans", sans-serif; }
  .nh { height: 9px; background: #246283; border-radius: 2px 2px 0 0; display: flex; align-items: center; gap: 2px; padding-left: 2px; white-space: nowrap; }
  .node p { position: relative; height: 10px; }
  .node b { position: absolute; width: 4px; height: 4px; border-radius: 50%; background: #a1a1a1; right: -3px; top: 3px; }
  .node b.y { background: #e8de1c; }
  .node b.g { background: #5fd35f; }
  .node b.v { background: #6363c7; }
  .node .l { padding-left: 4px; }
  .node .l b { right: auto; left: -3px; }
  .node .r { text-align: right; padding-right: 4px; }
  .prev { left: -20px; top: 176px; width: 32px; height: 43px; border-color: #b0542a; text-align: right; }
  .prev p { padding-right: 5px; }
  .ramp { left: 58px; top: 172px; width: 108px; height: 95px; }
  .ramp .nh { margin-bottom: 1px; }
  .nrow { display: flex; align-items: center; gap: 7px; height: 9px; margin: 5px 5px 2px; }
  .nsel { background: #272727; height: 8px; padding-left: 2px; }
  .nsel.m { margin-left: 4px; gap: 7px; margin-right: -5px; }
  .grad { height: 10px; margin: 0 7px; position: relative; border: 1px solid #151515; background: linear-gradient(90deg, #ff0 20.3%, #2f3218 20.3%); }
  .grad i { position: absolute; left: -3px; bottom: -3px; width: 5px; height: 5px; background: #ff0; border: 1px solid #222; }
  .grad i::before { content: ''; position: absolute; left: -1px; bottom: 100%; border: solid transparent; border-width: 0 2px 3px 3px; border-bottom-color: #666; }
  .grad .second { left: calc(20.3% - 3px); background: #2f3218; }
  .grad .second::before { border-bottom-color: #eee; }
  .nnum { display: flex; gap: 4px; margin: 4px 4px 3px; }
  .nnum > input { width: 28px; text-align: center; background: #484848; height: 8px; border-radius: 1px; }
  .nnum label { flex: 1; display: flex; align-items: center; background: #484848; height: 8px; padding: 0 6px; border-radius: 1px; }
  .nnum label input { flex: 1; width: 10px; text-align: right; height: 8px; }
  .swatch { background: #2f3218; border-radius: 1px; height: 8px; margin: 0 4px; }
  .ramp .swatch { margin-bottom: 2px; }
  .out { left: 219px; top: 170px; width: 90px; height: 53px; border-color: #8f4426; }
  .out .nh { background: #421c28; }
  .all { background: #282828; height: 9px; margin: 2px 0 1px 4px; padding-left: 4px; }
  .nside { width: 134px; flex: none; background: #303030; padding: 2px 5px; display: flex; flex-direction: column; gap: 2px; }
  .panel { background: #3d3d3d; border-radius: 3px; }
  .head { width: 100%; height: 15px; justify-content: flex-start; gap: 1px; padding: 0 4px; }
  .head i { margin-left: auto; color: #888; }
  .nfs { padding-top: 5px; }
  .nf { display: flex; align-items: center; height: 17px; padding: 0 5px 0 6px; }
  .nf > span:first-child { width: 28px; }
  .tf { flex: 1; display: flex; align-items: center; gap: 3px; height: 13px; background: #1d1d1d; border-radius: 2px; padding-left: 2px; }
  .tf input { flex: 1; width: 10px; height: 12px; }
  .colrow { display: flex; align-items: center; padding: 3px 17px 4px 13px; height: 20px; }
  .colrow i { margin-left: auto; }
  .vtabs { width: 14px; flex: none; display: flex; flex-direction: column; gap: 3px; background: #181818; padding-top: 3px; overflow: hidden; }
  .vtabs button { flex: none; width: 13px; writing-mode: vertical-rl; font-size: 9px; color: #ccc; background: #1d1d1d; border: 1px solid #303030; border-left: 0; border-radius: 0 3px 3px 0; }
  .vtabs span { transform: rotate(180deg); }
  .vtabs .on { background: #303030; color: #fff; }

  .scene { position: absolute; inset: 0; width: 100%; height: 100%; }
  .vbar, .tbar, .vbody { position: relative; }
  .vbar { background: #2c2c2c; overflow: hidden; }
  .pair { display: flex; align-items: center; margin-left: 4px; flex: none; }
  .vis { margin-left: auto; }
  .edge { width: 4px; height: 13px; background: #4772b3; margin-left: 7px; flex: none; }
  .tbar { height: 18px; flex: none; display: flex; align-items: center; background: #2c2c2c; padding: 0 5px 0 29px; }
  .seg { display: flex; border-radius: 2px; overflow: hidden; }
  .seg button { width: 13px; height: 13px; border-radius: 0; background: #545454; color: #d0d0d0; }
  .seg .blue { background: #4772b3; color: #fff; }
  .asset { display: flex; align-items: center; margin-left: 21px; gap: 2px; }
  .asset .seg button { width: 12px; }
  .find { display: flex; align-items: center; gap: 2px; height: 13px; background: #1d1d1d; border-radius: 2px; padding-left: 3px; }
  .find input { flex: 1; width: 10px; height: 12px; }
  .asset .find { width: 78px; }
  .asset .more { color: #999; }
  .opt { margin-left: auto; gap: 2px; height: 13px; padding: 0 1px 0 5px; background: #282828; }
  .vbody { flex: 1; min-height: 0; display: flex; }
  .toolbar { width: 43px; padding: 5px 0 0 5px; flex: none; display: flex; flex-direction: column; gap: 5px; }
  .toolbar div { display: flex; flex-direction: column; gap: 1px; width: 26px; }
  .toolbar button { height: 22px; background: #232323; border-radius: 2px; }
  .toolbar .blue { background-color: #4772b3; }
  .toolbar .corner { background-image: linear-gradient(135deg, transparent 50%, #aaa 50%); background-size: 3px 3px; background-repeat: no-repeat; background-position: 22px 18px; }
  .info { padding-top: 5px; flex: 1; color: #fff; white-space: nowrap; }
  .nav { width: 68px; padding-top: 7px; display: flex; flex-direction: column; gap: 2px; flex: none; }
  .nav button { width: 18px; height: 18px; background: #1f1f1f; border-radius: 50%; margin-left: 38px; }
  .vside { width: 128px; flex: none; display: flex; flex-direction: column; gap: 2px; padding: 1px 3px 0 0; background: linear-gradient(#303030, #303030) right/3px 100% no-repeat; }
  .form { padding: 5px 7px 3px 5px; display: flex; flex-direction: column; gap: 1px; }
  .form > label, .f { display: flex; align-items: center; gap: 6px; height: 13px; }
  .form > label > span:first-child, .f > span:first-child { width: 43px; text-align: right; flex: none; white-space: nowrap; }
  .num { background: #545454; height: 12px; text-align: center; }
  .form .num { flex: 1; width: 20px; }
  .off { color: #888; }
  .off .num { background: #474747; }
  .form .gap { margin-top: 10px; }
  .obj { flex: 1; display: flex; align-items: center; height: 13px; background: #2c2c2c; color: #999; border-radius: 2px; padding: 0 3px 0 2px; }
  .obj em { flex: 1; padding-left: 3px; }
  .sub { padding: 3px 0 1px 9px; }
  .lock { background: #363636; padding: 5px 7px 4px 5px; }
  .lk { margin-top: 2px; }
  .vside .panel .head { height: 17px; }
  .cursor { padding-bottom: 4px; }
  .cursor h4 { padding: 4px 6px 1px; color: #c8c8c8; height: 17px; }
  .cursor > :global(.head) { margin-bottom: 4px; }
  .stack { margin: 0 7px 1px 5px; display: flex; flex-direction: column; gap: 1px; border-radius: 2px; overflow: hidden; }
  .stack label { display: flex; align-items: center; height: 12px; background: #545454; padding: 0 9px 0 11px; }
  .stack input { flex: 1; width: 20px; text-align: right; height: 12px; }
  .euler { margin: 5px 7px 0 5px; height: 13px; background: #282828; border-radius: 2px; padding-left: 4px; }

  .timeline { flex: none; height: 40px; background: #1d1d1d; border-radius: 3px; overflow: hidden; display: flex; flex-direction: column; }
  .timeline .bar { height: 18px; background: #2e2e2e; padding-right: 5px; padding-top: 1px; }
  .tl { display: flex; gap: 10px; margin-left: 8px; }
  .tl button { gap: 3px; }
  .tl button:nth-child(2) { margin-left: -5px; }
  .tl button:nth-child(3) { margin-left: -2px; }
  .rec { margin-left: 194px; }
  .keyset { width: 13px; color: #666; }
  .play { margin-left: 5px; }
  .play button { width: 13px; color: #fff; }
  .frame { width: 49px; margin-left: auto; margin-right: 4px; }
  .range { display: flex; gap: 1px; margin-left: 2px; }
  .range label { display: flex; width: 56px; height: 12px; background: #545454; padding: 0 7px 0 8px; }
  .range input { flex: 1; width: 10px; text-align: right; height: 12px; }
  .ruler { flex: none; height: 15px; padding-top: 1px; display: grid; grid-template-columns: 45px repeat(25, minmax(0, 1fr)); padding-right: 16px; text-align: center; line-height: 14px; color: #b8b8b8; }
  .one { padding-left: 19px; }
  .one b { display: block; width: 15px; margin-left: 6px; background: #4772b3; color: #fff; border-radius: 3px; height: 12px; line-height: 13px; }
  .scroll { height: 7px; display: flex; align-items: center; }
  .scroll i { flex: 1; height: 6px; background: #545454; border-radius: 3px; border-left: 5px solid #333; }

  .outliner { height: 164px; flex: none; background: #282828; border-radius: 3px; overflow: hidden; }
  .outliner .bar { background: #2a2a2a; gap: 4px; }
  .outliner .find { flex: 1; margin: 0 6px 0 8px; }
  .outliner .plain { width: 14px; overflow: hidden; }
  .rows { display: grid; grid-template-rows: repeat(6, 1fr); height: 81px; margin-top: 1px; color: #d8d8d8; }
  .o { display: flex; align-items: center; gap: 5px; padding-right: 6px; }
  .o i { margin-left: auto; display: flex; align-items: center; gap: 4px; color: #eee; }
  .o b { background: #4a4a4a; border-radius: 2px; padding: 0 1px; margin-left: 2px; }
  .root { padding-left: 15px; gap: 3px; }
  .coll { padding-left: 16px; gap: 2px; }
  .coll > span { margin-left: 1px; }
  .coll input[type='checkbox'] { background: #eee; width: 7px; height: 7px; }
  .coll input[type='checkbox']::after { border-color: #222; margin: 0 2px; }
  .child { padding-left: 29px; gap: 3px; }
  .o .oi { background: none; color: #d0814a; margin-left: 1px; }
  .sel { background: #334d80; }
  .sel > span { color: #f5a13c; }
  .o.sel .oi { background: #4c628c; }
  .o u { color: #10b890; }
  .child u:first-of-type { margin-left: 12px; }
  .o .cam { background: #4a4a4a; border-radius: 2px; }
  .o .mod { color: #6a90e8; }

  .propsed { flex: 1; min-height: 0; display: flex; flex-direction: column; background: #303030; border-radius: 3px; overflow: hidden; }
  .propsed .bar { background: #303030; padding: 0 6px 0 5px; justify-content: space-between; }
  .mid { width: 77px; }
  .pbody { flex: 1; min-height: 0; display: flex; }
  .pnav { width: 20px; flex: none; background: #1c1c1c; display: flex; flex-direction: column; align-items: center; padding-top: 5px; }
  .pnav button { width: 18px; height: 19px; flex: none; border-radius: 2px 0 0 2px; }
  .pnav .gap { margin-bottom: 5px; }
  .pnav .on { background: #303030; margin-left: 2px; }
  .pmain { flex: 1; min-width: 0; display: flex; flex-direction: column; padding: 0 6px 0 5px; overflow: hidden; }
  .pmain .crumbs { padding-top: 6px; gap: 5px; }
  .pmain .crumbs i { margin-left: auto; color: #aaa; }
  .slots { display: flex; gap: 7px; margin-top: 12px; }
  .lb { flex: 1; height: 52px; background: #262626; border-radius: 2px; padding: 3px; display: flex; flex-direction: column; }
  .lb button { justify-content: flex-start; height: 12px; background: #484850; gap: 6px; padding-left: 3px; }
  .ball { width: 8px; height: 8px; border-radius: 50%; background: #35371a; border-right: 2px solid #ff0; }
  .lb div { margin-top: auto; display: flex; justify-content: space-between; padding: 0 2px; }
  .lb div span { width: 36px; }
  .lbt { display: flex; flex-direction: column; width: 12px; }
  .lbt button { height: 13px; background: #545454; border-radius: 2px 2px 0 0; }
  .lbt .dk { background: #282828; margin-top: 5px; border-radius: 2px; }
  .pid { background: none; margin: 4px 0 8px; }
  .pid input { background: #1d1d1d; width: 42px; flex: none; }
  .pid span { flex: 1; }
  .pmain .panel { flex: none; margin-bottom: 2px; }
  .pmain .head { height: 16px; }
  .surf { padding: 0 5px 5px; }
  .surf > :global(.head) { margin-left: -5px; width: calc(100% + 10px); }
  .use { width: 100%; height: 13px; background: #4772b3; padding-left: 2px; margin-top: 5px; }
  .use span { flex: 1; }
  .sr { display: flex; align-items: center; gap: 7px; margin-top: 11px; height: 13px; }
  .sr > span { width: 39px; text-align: right; }
  .sr button { background: #282828; height: 12px; width: 62px; gap: 5px; justify-content: flex-start; padding-left: 4px; }
  .dot { width: 3px; height: 3px; flex: none; border-radius: 50%; background: #ddd; }
  .gr { background: #5fd35f; width: 4px; height: 4px; }
  .gy { background: #a1a1a1; width: 4px; height: 4px; }
  .ctl { display: flex; align-items: center; justify-content: space-between; margin: 15px 6px 3px 2px; height: 13px; }
  .ctl button { background: #282828; height: 12px; padding: 0 1px 0 4px; gap: 2px; }
  .big { height: 14px; margin: 0 4px 7px 3px; }
  .big i { width: 7px; height: 6px; bottom: -3px; }
  .big i::before { border-width: 0 4px 5px 3px; }
  .pos { display: flex; align-items: center; height: 12px; margin-bottom: 5px; gap: 6px; padding-right: 6px; }
  .pos > .num { width: 33px; }
  .pos label { flex: 1; display: flex; justify-content: flex-end; gap: 7px; }
  .pos label .num { width: 36px; }
  .pos .swatch { flex: 1; height: 12px; margin: 0; }
  .sr.fac { margin-top: 0; height: 12px; padding-left: 3px; }
  .fac > span { width: 22px; }
  .last { height: 40px; }

  footer { height: 13px; flex: none; display: flex; align-items: center; color: #969696; padding: 0 5px 0 7px; background: #191919; }
  footer span { display: flex; align-items: center; gap: 4px; width: 151px; }
  footer p { margin-left: auto; }
</style>
